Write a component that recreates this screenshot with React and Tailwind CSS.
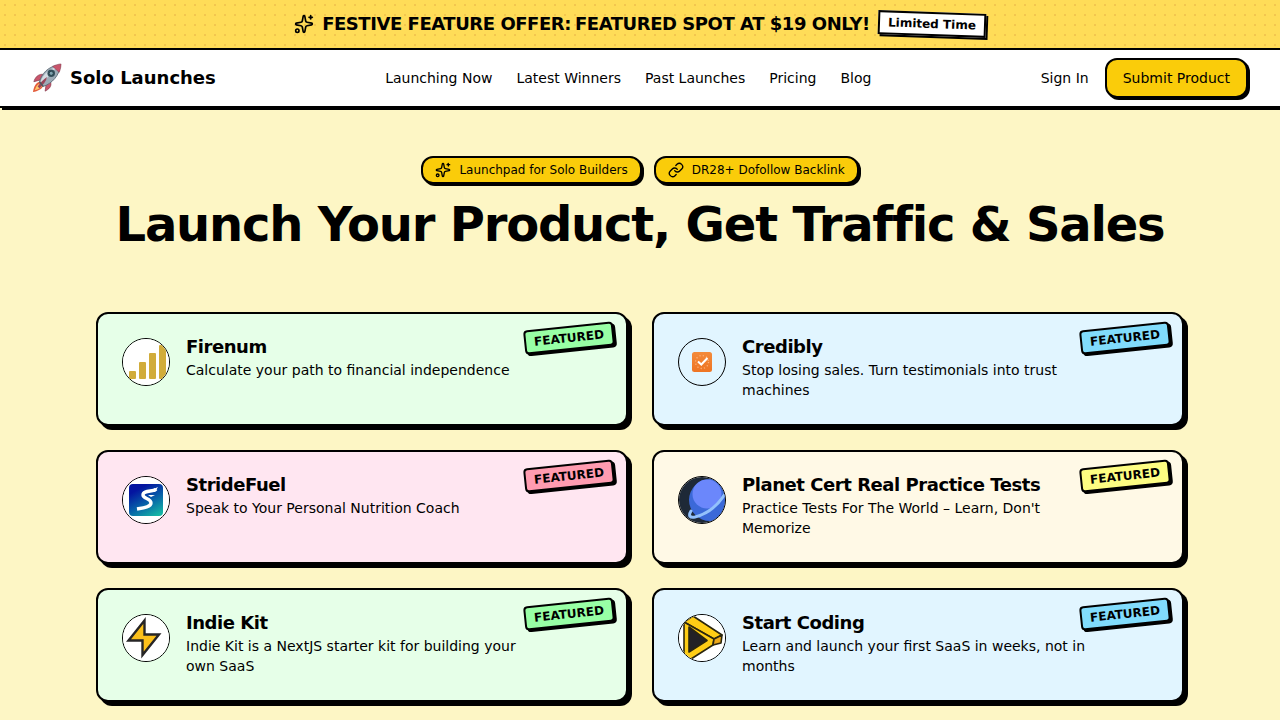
import React from 'react';
import { Sparkles, Link as LinkIcon } from 'lucide-react';

const navLinks = ['Launching Now', 'Latest Winners', 'Past Launches', 'Pricing', 'Blog'];

const RocketLogo = () => (
  <svg viewBox="0 0 32 32" className="size-[30px] shrink-0" aria-hidden="true">
    <path d="M11 12 C6 12 3 16 2 20 L9 18 L14 13 Z" fill="#c9556b" stroke="#7d3548" strokeWidth=".7" />
    <path d="M20 21 C21 25 18 28 14 30 L15 23 L19 19 Z" fill="#c9556b" stroke="#7d3548" strokeWidth=".7" />
    <path d="M8 20 C4 21 2 25 1 31 C6 30 11 28 12 24 Z" fill="#e35d3c" />
    <path d="M8 22 C5 23 4 26 3 29 C7 28 9 27 11 24 Z" fill="#ffc66a" />
    <path d="M8 20 C10 12 17 3 30 2 C30 13 21 22 12 25 Z" fill="#9dabb6" stroke="#596773" strokeWidth=".9" />
    <path d="M9 20 C12 12 18 6 27 4 C22 9 16 16 11 22 Z" fill="#d3dce2" />
    <path d="M22 3.500 C25 2 29 1 31 1 C31 4 30 8 29 10 C27 8 24.500 6 22 3.500 Z" fill="#c9556b" stroke="#7d3548" strokeWidth=".5" />
    <circle cx="20.500" cy="11" r="4" fill="#35505b" />
    <circle cx="20.500" cy="11" r="2.200" fill="#7fa3ae" stroke="#1e343d" strokeWidth=".8" />
    <path d="M6 25 C9 21 12 18 16 15 C15 20 12 23 8 27 Z" fill="#9a4358" />
    <path d="M8 20 L12 25" stroke="#4d5962" strokeWidth="1.500" />
  </svg>
);

const FirenumLogo = () => (
  <svg viewBox="0 0 46 46" className="size-full" aria-hidden="true">
    <rect width="46" height="46" fill="#fff" />
    <g fill="#d1ac3a">
      <rect x="6" y="32" width="7" height="8" rx="1" />
      <rect x="16" y="23" width="7" height="17" rx="1" />
      <rect x="26" y="14" width="7" height="26" rx="1" />
      <rect x="36" y="6" width="7" height="34" rx="1" />
    </g>
  </svg>
);

const CrediblyLogo = () => (
  <svg viewBox="0 0 46 46" className="size-full" aria-hidden="true">
    <defs>
      <linearGradient id="credibly" x1="0" y1="0" x2="0" y2="1">
        <stop offset="0" stopColor="#f38b3b" />
        <stop offset="1" stopColor="#ee7423" />
      </linearGradient>
    </defs>
    <rect x="13" y="13" width="20" height="20" rx="2.500" fill="url(#credibly)" />
    <circle cx="23" cy="23" r="6.500" fill="none" stroke="#fbb27c" strokeWidth="1.300" strokeDasharray="1.2 2.200" />
    <path d="M19 22.500 L22.300 25.500 L28.500 19" fill="none" stroke="#fff" strokeWidth="2" />
  </svg>
);

const StrideFuelLogo = () => (
  <svg viewBox="0 0 46 46" className="size-full" aria-hidden="true">
    <defs>
      <linearGradient id="stride" x1="0.200" y1="0" x2="0.800" y2="1">
        <stop offset="0.150" stopColor="#0414a0" />
        <stop offset="0.550" stopColor="#075da8" />
        <stop offset="1" stopColor="#15b5a5" />
      </linearGradient>
    </defs>
    <rect width="46" height="46" fill="#fff" />
    <rect x="6" y="7" width="34" height="32" rx="4" fill="url(#stride)" />
    <path d="M33 12 C31 15 20 13 20 18 C20 22 28 21 28 26 C28 30 20 31 14 32" fill="none" stroke="#fff" strokeWidth="3.400" strokeLinejoin="round" />
    <path d="M26 14 L35 10 L32 15 Z M25 18 L32 18 L28 20 Z" fill="#fff" />
  </svg>
);

const PlanetLogo = () => (
  <svg viewBox="0 0 46 46" className="size-full" aria-hidden="true">
    <rect width="46" height="46" fill="#1e2937" />
    <circle cx="31" cy="23" r="21" fill="#3b69d8" />
    <circle cx="28" cy="17" r="14.500" fill="#6b87fb" />
    <path d="M12 34 C9 39 11 41 16 40 C28 37 39 28 46 17" fill="none" stroke="#93c1fb" strokeWidth="3" strokeLinecap="round" />
  </svg>
);

const IndieKitLogo = () => (
  <svg viewBox="0 0 46 46" className="size-full" aria-hidden="true">
    <rect width="46" height="46" fill="#fff" />
    <path d="M21.500 5.500 L5.500 25.500 L19.500 25.500 L19.500 40 L36 19.500 L21.500 19.500 Z" fill="#fcc01b" stroke="#262526" strokeWidth="2.400" />
  </svg>
);

const StartCodingLogo = () => (
  <svg viewBox="0 0 46 46" className="size-full" aria-hidden="true">
    <rect width="46" height="46" fill="#fff" />
    <g stroke="#2b260f" strokeWidth="1.600" strokeLinejoin="round">
      <path d="M5 7 L14 1 L43 20 L35 24 Z" fill="#ffcd15" />
      <path d="M5 7 L35 24 L34 30 L12 44 L5 44 Z" fill="#ffcd15" />
      <path d="M35 24 L43 20 L42 28 L34 30 Z" fill="#eca91b" />
      <path d="M10 12 L28 25.500 L10 37 Z" fill="#222126" />
    </g>
  </svg>
);

const products = [
  { name: 'Firenum', tagline: 'Calculate your path to financial independence', Logo: FirenumLogo, card: 'bg-[#e6ffe8]', badge: 'bg-[#98ffa5]' },
  { name: 'Credibly', tagline: 'Stop losing sales. Turn testimonials into trust machines', Logo: CrediblyLogo, card: 'bg-[#e1f5ff]', badge: 'bg-[#81dcfc]' },
  { name: 'StrideFuel', tagline: 'Speak to Your Personal Nutrition Coach', Logo: StrideFuelLogo, card: 'bg-[#ffe6f1]', badge: 'bg-[#ff9bb0]' },
  { name: 'Planet Cert Real Practice Tests', tagline: "Practice Tests For The World – Learn, Don't Memorize", Logo: PlanetLogo, card: 'bg-[#fff9e6]', badge: 'bg-[#fdfd82]' },
  { name: 'Indie Kit', tagline: 'Indie Kit is a NextJS starter kit for building your own SaaS', Logo: IndieKitLogo, card: 'bg-[#e6ffe8]', badge: 'bg-[#98ffa5]' },
  { name: 'Start Coding', tagline: 'Learn and launch your first SaaS in weeks, not in months', Logo: StartCodingLogo, card: 'bg-[#e1f5ff]', badge: 'bg-[#81dcfc]' },
];

const Pill = ({ icon: Icon, children }) => (
  <div className="flex items-center gap-2 rounded-xl border-2 border-black bg-[#facc0a] px-3 py-1 text-xs shadow-[2px_2px_0_#000]">
    <Icon size={16} /> {children}
  </div>
);

const ProductCard = ({ name, tagline, Logo, card, badge }) => (
  <a href="#" className={`relative flex min-h-[114px] items-start gap-4 rounded-xl border-2 border-black p-6 shadow-[4px_4px_0_#000] ${card}`}>
    <div className="size-12 shrink-0 overflow-hidden rounded-full border border-black">
      <Logo />
    </div>
    <div className="min-w-0 flex-1 pr-16">
      <h2 className="text-lg leading-[18px] font-bold tracking-tight">{name}</h2>
      <p className="mt-1 text-sm">{tagline}</p>
    </div>
    <span className={`absolute top-3 right-3 -rotate-6 rounded border-2 border-black px-2 py-0.5 text-xs font-bold shadow-[2px_2px_0_#000] ${badge}`}>
      FEATURED
    </span>
  </a>
);

const App = () => {
  return (
    <div className="min-h-screen bg-[#fdf6c5] font-['DejaVu_Sans',sans-serif] text-black">
      {/* Offer banner */}
      <div className="flex items-center justify-center gap-2 border-b-2 border-black bg-[#ffdc58] bg-[radial-gradient(circle,#f3c64f_1px,transparent_1px)] bg-[size:10px_10px] py-2">
        <Sparkles size={20} />
        <p className="flex gap-1 text-lg leading-8 font-bold tracking-tight">
          <span>FESTIVE FEATURE OFFER:</span>
          <span>FEATURED SPOT AT $19 ONLY!</span>
        </p>
        <span className="rotate-2 border-2 border-black bg-white px-2 py-0.5 text-xs font-bold shadow-[2px_2px_0_#000]">Limited Time</span>
      </div>

      {/* Navbar */}
      <header className="flex h-[58px] items-center justify-between border-b-2 border-black bg-white px-8 shadow-[2px_2px_0_#000]">
        <a href="#" className="flex items-center gap-2 text-lg font-bold">
          <RocketLogo /> Solo Launches
        </a>
        <nav className="flex items-center gap-6 text-sm">
          {navLinks.map((label) => (
            <a key={label} href="#">{label}</a>
          ))}
        </nav>
        <div className="flex items-center gap-4 text-sm">
          <a href="#">Sign In</a>
          <button className="h-10 rounded-xl border-2 border-black bg-[#facc0a] px-4 shadow-[2px_2px_0_#000]">Submit Product</button>
        </div>
      </header>

      <main className="mx-auto max-w-[1088px] pt-12">
        <div className="flex justify-center gap-3">
          <Pill icon={Sparkles}>Launchpad for Solo Builders</Pill>
          <Pill icon={LinkIcon}>DR28+ Dofollow Backlink</Pill>
        </div>
        <h1 className="mt-4 text-center text-5xl font-bold tracking-tight">Launch Your Product, Get Traffic &amp; Sales</h1>

        {/* Featured products */}
        <section className="mt-16 grid grid-cols-2 gap-6 pb-12">
          {products.map((p) => (
            <ProductCard key={p.name} {...p} />
          ))}
        </section>
      </main>
    </div>
  );
};

export default App;
